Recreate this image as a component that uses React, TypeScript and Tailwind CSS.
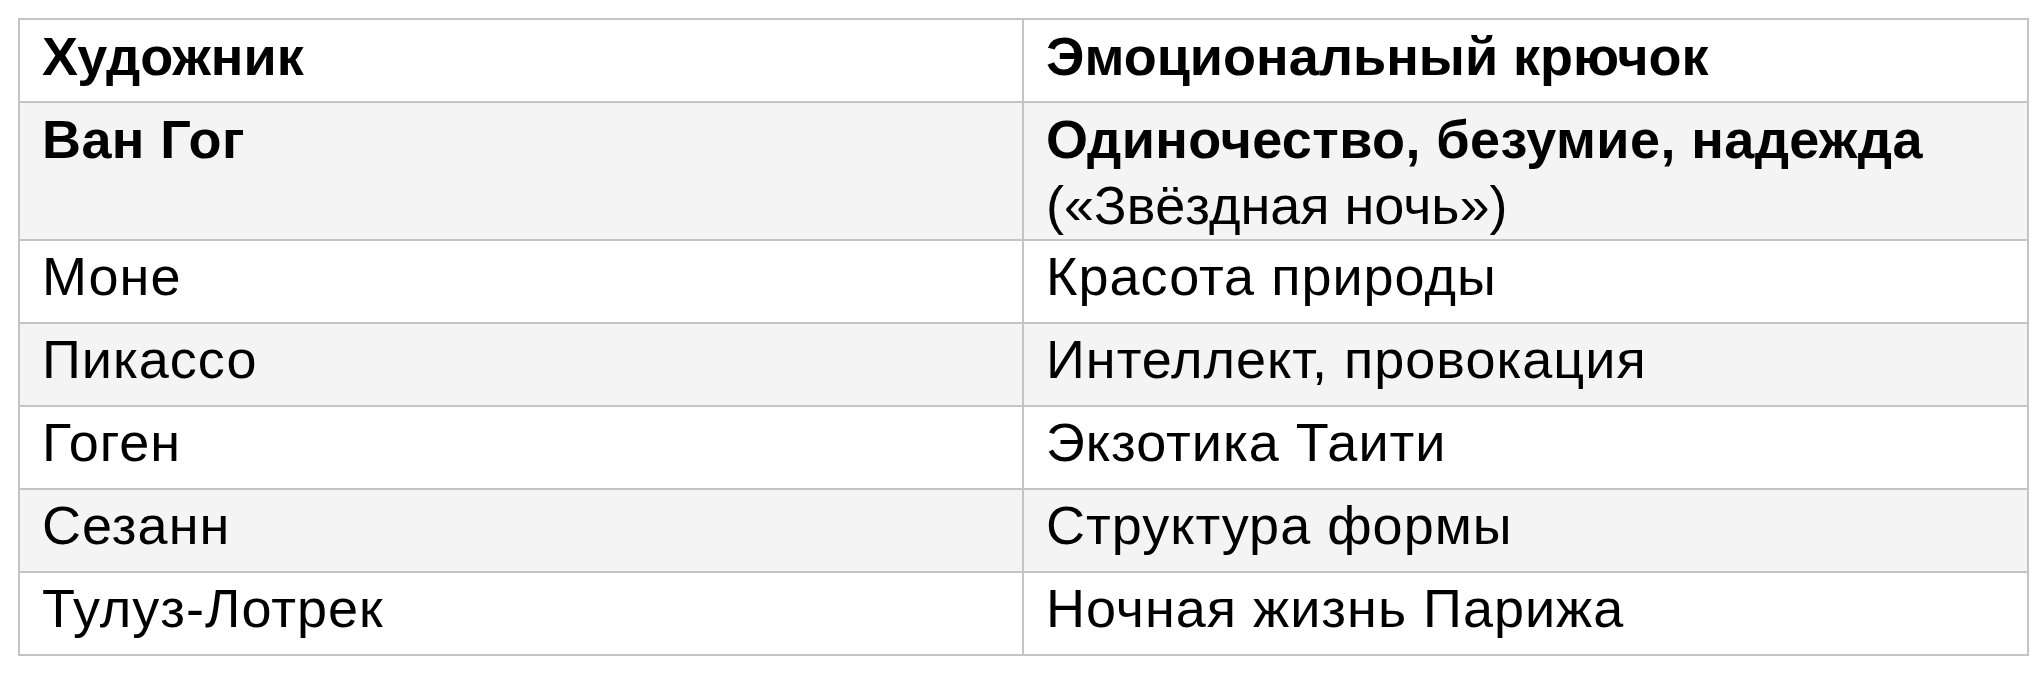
import React from "react";

const rows: { a: string; b: string; sub?: string; bold?: boolean }[] = [
  { a: "Ван Гог", b: "Одиночество, безумие, надежда", sub: "(«Звёздная ночь»)", bold: true },
  { a: "Моне", b: "Красота природы" },
  { a: "Пикассо", b: "Интеллект, провокация" },
  { a: "Гоген", b: "Экзотика Таити" },
  { a: "Сезанн", b: "Структура формы" },
  { a: "Тулуз-Лотрек", b: "Ночная жизнь Парижа" },
];

const cell = "border-2 border-[#c4c4c4] text-left align-top px-[22px]";

export default function App() {
  return (
    <div
      className="w-[2043px] h-[679px] bg-white pt-[18px] pl-[18px] text-black"
      style={{ fontFamily: '"Liberation Sans", Arial, sans-serif' }}
    >
      <table className="border-collapse table-fixed w-[2009px] text-[54px] leading-[62px]">
        <colgroup>
          <col className="w-[1004px]" />
          <col className="w-[1005px]" />
        </colgroup>
        <thead>
          <tr className="bg-white">
            <th className={cell + " pt-[5px] pb-[14px] font-bold"}>Художник</th>
            <th className={cell + " pt-[5px] pb-[14px] font-bold"}>Эмоциональный крючок</th>
          </tr>
        </thead>
        <tbody>
          {rows.map((r, i) => (
            <tr key={r.a} className={i % 2 === 0 ? "bg-[#f4f4f4]" : "bg-white"}>
              <td
                className={
                  cell +
                  (r.sub ? " pt-[5px] pb-[3px]" : " pt-[4px] pb-[15px]") +
                  (r.bold ? " font-bold tracking-[0.4px]" : " font-normal tracking-[1px]")
                }
              >
                {r.a}
              </td>
              <td
                className={
                  cell + (r.sub ? " pt-[5px] pb-[3px]" : " pt-[4px] pb-[15px] tracking-[1px]")
                }
              >
                {r.sub ? (
                  <>
                    <span className="block font-bold tracking-[0.4px]">{r.b}</span>
                    <span className="block mt-[4px] font-normal">{r.sub}</span>
                  </>
                ) : (
                  r.b
                )}
              </td>
            </tr>
          ))}
        </tbody>
      </table>
    </div>
  );
}
